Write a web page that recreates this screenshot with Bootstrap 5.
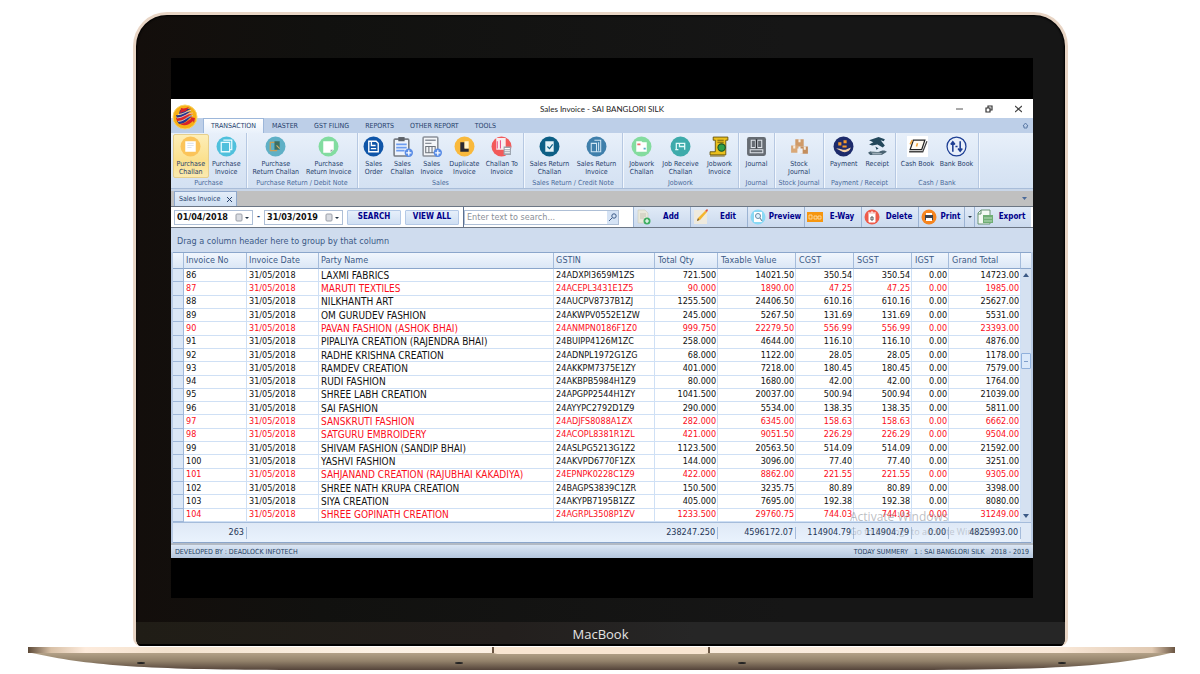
<!DOCTYPE html>
<html lang="en">
<head>
<meta charset="utf-8">
<meta name="viewport" content="width=device-width, initial-scale=1">
<title>Sales Invoice - SAI BANGLORI SILK</title>
<link href="https://cdn.jsdelivr.net/npm/bootstrap@5.3.0/dist/css/bootstrap.min.css" rel="stylesheet">
<style>
  :root { --ink: #26406b; --line: #8ba3c4; --navy: #00008b; }
  body { background: #fff; font-family: "DejaVu Sans Condensed", "DejaVu Sans", sans-serif; font-size: 7px; line-height: 8px; color: var(--ink); }
  button, input { font: inherit; color: inherit; }
  button { background: none; border: 0; padding: 0; }
  svg { display: block; flex: none; }

  /* laptop */
  .lid { margin: 12px 132px 0 133px; border: 3px solid #e8d5c5; border-bottom: 0; border-radius: 34px 34px 8px 8px; background: linear-gradient(90deg, #130e0b, #11110f 20%, #161616 70%); overflow: hidden; box-shadow: inset 0 0 2px 1px #000; }
  .bezel { padding: 43px 32px 24px 35px; }
  .display { background: #000; padding: 41px 0 40px; }
  .chin { height: 24px; background: linear-gradient(90deg, #201d16, #231f1d 40%, #262626 60%); border-bottom: 2px solid #000; color: #e4e4e4; font: 13px/24px "Open Sans", sans-serif; }
  .deck { margin: 0 25px 0 28px; height: 25px; }

  /* window */
  .app { background: #b9cbe4; }
  .titlebar { height: 19px; background: #fff; color: #222; font-family: Lato, sans-serif; font-size: 8px; }
  .titlebar .controls { gap: 22px; padding-right: 11px; }
  .orb { left: 1px; top: 5px; z-index: 2; }
  .tabstrip { height: 15px; background: #bdcfe8; padding: 0 4px 0 32px; }
  .tabstrip a { color: var(--ink); text-decoration: none; padding: 4px 0 3px; margin-right: 16px; }
  .tabstrip a.active { background: linear-gradient(#fff, #e9f1fb); padding: 3px 7px; margin-right: 8px; border: 1px solid #9db7da; border-bottom: 0; }
  .ribbon { height: 56px; background: linear-gradient(#e8f0fa, #dae6f5 60%, #d4e1f2); border-bottom: 1px solid #a9bdd9; }
  .rgroup { border-right: 1px solid #b6c8e2; box-shadow: 1px 0 0 #f2f7fd; padding: 1px 2px 0; }
  .rgroup .caption { text-align: center; line-height: 9px; color: #4a6a9a; white-space: nowrap; }
  .rgroup button { flex: 1 1 auto; display: flex; flex-direction: column; align-items: center; padding-top: 1px; height: 44px; white-space: nowrap; border: 1px solid transparent; border-radius: 2px; }
  .rgroup button svg { width: 21px; height: 21px; margin-bottom: 3px; }
  .rgroup button.hot { background: linear-gradient(#fdeeb8, #fbe08d 60%, #fbeab0); border-color: #e6cf8c; }
  .rg-1 { width: 76px; } .rg-2 { width: 111px; } .rg-3 { width: 166px; } .rg-4 { width: 99px; } .rg-5 { width: 116px; }
  .rg-6 { width: 36px; } .rg-7 { width: 49px; } .rg-8 { width: 72px; } .rg-9 { width: 83px; }

  .doctabs { height: 17px; background: #c0c0c0; border-top: 2px solid #c9d6e8; padding-left: 3px; padding-right: 6px; }
  .doctabs .doctab { background: linear-gradient(#e3edf9, #cfdff2); border: 1px solid #8fa8cc; border-bottom: 0; padding: 2px 4px; gap: 7px; }

  .tools { height: 22px; border-top: 1px solid #6c7684; border-bottom: 1px solid #6c7684; background: #fff; font-size: 8px; font-weight: bold; padding: 0 2px 0 3px; }
  .datebox { width: 79px; height: 15px; border: 1px solid #aebfd6; }
  .datebox input { font-size: 9px; color: #111; width: 60px; border: 0; padding: 0 0 0 2px; background: none; font-weight: bold; }
  .blue-btn { width: 54px; height: 15px; border: 1px solid #b4c9e6; border-radius: 1px; background: linear-gradient(#e6effa, #cfdff3); color: var(--navy); font-weight: bold; }
  .searchbox { width: 155px; height: 15px; border: 1px solid #aebfd6; font-size: 9px; font-weight: normal; }
  .searchbox input { border: 0; padding: 0 2px; flex: 1; min-width: 0; font-weight: normal; }
  .searchbox input::placeholder { color: #8a8f98; opacity: 1; }
  .searchbox button { width: 11px; background: #d5e3f5; }
  .actions { background: #d3e0f1; height: 20px; }
  .actions button { width: 57px; padding: 0 2px; gap: 2px; color: var(--navy); font-weight: bold; border-left: 1px solid #9bb3d3; background: linear-gradient(#e0eaf7, #cbdaee); display: flex; align-items: center; }
  .actions button span { flex: 1; text-align: center; }
  .actions button.print { width: 46px; }
  .actions button.drop { width: 10px; }

  .groupbar { height: 24px; background: #cfdcee; font-size: 9px; line-height: 26px; padding-left: 6px; color: #3c5a86; }
  .gridwrap { margin: 0 2px; border: 1px solid #8ba6cb; border-width: 1px 0; background: #fff; }
  .grid { table-layout: fixed; width: 100%; height: 289px; border-collapse: separate; border-spacing: 0; font-size: 9px; line-height: 11px; color: #111; }
  .grid td, .grid th { padding: 0 2px; white-space: nowrap; overflow: hidden; vertical-align: middle; }
  .grid thead th { height: 16px; font-weight: normal; color: #3c5a86; background: linear-gradient(#f1f6fd, #dbe7f6); border-right: 1px solid #a5bcdb; border-bottom: 1px solid #8ba6cb; }
  .grid thead th:nth-child(n+6) { padding-left: 3px; }
  .grid tbody td { border-right: 1px solid #cfe0f5; border-bottom: 1px solid #cfe0f5; }
  .grid tbody td:first-child { background: #dbe7f6; border-right-color: #9fb8da; border-bottom-color: #9fb8da; }
  .grid tbody tr.due { color: #fb0d1b; }
  .grid td.party { font-size: 10px; }
  .grid td.num { text-align: right; padding-right: 1px; }
  .grid tfoot td { height: 20px; color: #1f3657; text-align: right; background: linear-gradient(#dfe9f6, #e9f2fd); border-top: 1px solid #a5bcdb; }
  .grid tfoot .sum { background: linear-gradient(#a5bcdb, #a5bcdb) right center / 1px 12px no-repeat, linear-gradient(#dfe9f6, #e9f2fd); padding-right: 3px; }
  .c-mark { width: 11px; } .c-no { width: 63px; } .c-date { width: 72px; } .c-gst { width: 101px; } .c-qty { width: 63px; }
  .c-tax { width: 78px; } .c-tx { width: 58px; } .c-igst { width: 37px; } .c-total { width: 72px; }
  .rail { width: 10px; background: #dfe9f6; }
  .rail .cap { height: 16px; background: linear-gradient(#f1f6fd, #dbe7f6); border-bottom: 1px solid #8ba6cb; }
  .rail .track { background: #d5e1f1; }
  .rail .thumb { height: 16px; border: 1px solid #8fb0dc; background: linear-gradient(#7f9fcb, #7f9fcb) center / 4px 1px no-repeat, #dbe9fa; border-radius: 1px; margin-top: 76px; }
  .rail .foot { height: 20px; border-top: 1px solid #a5bcdb; }
  .watermark { right: 23px; bottom: 5px; width: 160px; color: rgba(120, 125, 135, .5); font-family: "Open Sans", sans-serif; pointer-events: none; white-space: nowrap; }
  .watermark div:first-child { font-size: 12px; line-height: 16px; }
  .watermark div:last-child { font-size: 9px; line-height: 13px; opacity: .7; }
  .statusbar { height: 15px; border-top: 2px solid #b3bac4; background: linear-gradient(#dbe6f4, #b5c7de); padding: 0 4px; color: #24405f; white-space: pre; }
</style>
</head>
<body>
<svg width="0" height="0" class="position-absolute" aria-hidden="true">
  <symbol id="i-case" viewBox="0 0 20 20"><path d="M5 6h8v9H5zM7 4h8v9h-2" fill="none" stroke="#e9fbff" stroke-width="1.2"/></symbol>
  <symbol id="i-plus" viewBox="0 0 20 20"><circle cx="16" cy="16" r="4" fill="#5a8de6"/><path d="M16 13.500v5M13.500 16h5" stroke="#fff" stroke-width="1.200"/></symbol>
</svg>

<main>
  <div class="lid">
    <div class="bezel">
      <div class="display">
        <div class="app position-relative">

          <svg class="orb position-absolute" width="26" height="26" viewBox="0 0 26 26" aria-hidden="true">
            <circle cx="13" cy="13" r="12" fill="#f7b016" stroke="#f6d36b"/>
            <path d="M8 6c4 1 7-2 11-1-4 1-7 5-12 5zM4 11c6 1 9-4 15-4-4 3-8 7-14 7z" fill="#27348f"/>
            <path d="M4 14c6 1 10-5 17-5-5 3-9 8-16 8z" fill="#d8222b"/>
            <path d="M9 4c3 1 5 0 8-1l-3 4-6 2z" fill="#d8222b"/>
            <path d="M5 17c6 1 10-5 16-6-4 4-8 9-14 9z" fill="#27348f"/>
            <path d="M8 20c5 0 8-4 11-5l-1-2 5 1-1 5-1-2c-3 3-8 6-13 3z" fill="#d8222b"/>
            <path d="M5 14c6 0 10-5 16-5M6 17.500c6 0 9-5 15-6M6 10.500c5 0 8-3 13-4" stroke="#f5e3dc" stroke-width=".7" fill="none"/>
          </svg>

          <header class="titlebar d-flex align-items-center position-relative">
            <div class="flex-fill text-center">Sales Invoice - SAI BANGLORI SILK</div>
            <div class="controls d-flex align-items-center position-absolute end-0">
              <button aria-label="Minimize"><svg width="7" height="8" viewBox="0 0 7 8"><path d="M0 4h7" stroke="#555"/></svg></button>
              <button aria-label="Restore"><svg width="8" height="8" viewBox="0 0 8 8"><path d="M1 3h4v4H1zM3 3V1h4v4H5" fill="none" stroke="#333" stroke-width="1.200"/></svg></button>
              <button aria-label="Close"><svg width="7" height="8" viewBox="0 0 7 8"><path d="M0 1l7 6M7 1L0 7" stroke="#444" stroke-width="1.200"/></svg></button>
            </div>
          </header>

          <nav class="tabstrip d-flex align-items-stretch">
            <a href="#" class="active">TRANSACTION</a><a href="#">MASTER</a><a href="#">GST FILING</a><a href="#">REPORTS</a><a href="#">OTHER REPORT</a><a href="#">TOOLS</a>
            <button class="ms-auto" aria-label="Collapse ribbon"><svg width="7" height="7" viewBox="0 0 7 7"><path d="M1 4l2.500-3L6 4M1 4h1v2h3V4h1" fill="none" stroke="#4a6a9a" stroke-width=".8"/></svg></button>
          </nav>

          <div class="ribbon d-flex">
            <section class="rgroup rg-1 d-flex flex-column justify-content-between">
              <div class="d-flex">
                <button class="hot"><svg viewBox="0 0 20 20"><circle cx="10" cy="10" r="9.500" fill="#fbc45a"/><rect x="5" y="5" width="10" height="10" fill="#fff"/><path d="M7 7h6M7 9h6M7 11h4" stroke="#dfe5ee"/></svg><span>Purchase<br>Challan</span></button>
                <button><svg viewBox="0 0 20 20"><circle cx="10" cy="10" r="9.500" fill="#4fc0dc"/><use href="#i-case"/></svg><span>Purchase<br>Invoice</span></button>
              </div>
              <div class="caption">Purchase</div>
            </section>
            <section class="rgroup rg-2 d-flex flex-column justify-content-between">
              <div class="d-flex">
                <button><svg viewBox="0 0 20 20"><circle cx="10" cy="10" r="9.500" fill="#5fb0c6"/><path d="M5 6h6v8H5z" fill="none" stroke="#c9a05a" stroke-width="1.200"/><path d="M9 5h5v8H9z" fill="#3c6f63"/><path d="M11 9l3 3" stroke="#d9b46a"/></svg><span>Purchase<br>Return Challan</span></button>
                <button><svg viewBox="0 0 20 20"><circle cx="10" cy="10" r="9.500" fill="#82dca0"/><path d="M5 5h10v8l-3 3H5z" fill="#fff"/><path d="M14.500 13H12v2.500z" fill="#99a0a8"/></svg><span>Purchase<br>Return Invoice</span></button>
              </div>
              <div class="caption">Purchase Return / Debit Note</div>
            </section>
            <section class="rgroup rg-3 d-flex flex-column justify-content-between">
              <div class="d-flex">
                <button><svg viewBox="0 0 20 20"><circle cx="10" cy="10" r="9.500" fill="#0f55a8"/><path d="M5.500 5h7l2 2v8h-9z" fill="none" stroke="#fff" stroke-width="1.300"/><path d="M8 5v4h4M7.500 12h5" stroke="#fff" fill="none" stroke-width="1.300"/></svg><span>Sales<br>Order</span></button>
                <button><svg viewBox="0 0 20 20"><rect x="2" y="3" width="14" height="16" rx="1" fill="#eef3fb" stroke="#777c84" stroke-width="1.500"/><rect x="6" y="1" width="6" height="4" fill="#5c6168"/><path d="M4 8h10M4 11h10M4 14h8" stroke="#6c9cf0" stroke-width="1.600"/><use href="#i-plus"/></svg><span>Sales<br>Challan</span></button>
                <button><svg viewBox="0 0 20 20"><rect x="2" y="1" width="14" height="18" rx="1" fill="#f4f6f9" stroke="#8a9099" stroke-width="1.500"/><path d="M4 4h10M4 7h6" stroke="#8a9099" stroke-width="1.300"/><path d="M4.500 10h9v6h-9zM7.500 10v6M10.500 10v6" stroke="#6d737b" fill="none"/><use href="#i-plus"/></svg><span>Sales<br>Invoice</span></button>
                <button><svg viewBox="0 0 20 20"><circle cx="10" cy="10" r="9.500" fill="#f9b93c"/><path d="M6 6h4v6h4v3H6z" fill="#2b2a33"/><path d="M10 5h4v7h-4z" fill="#fff3cf"/></svg><span>Duplicate<br>Invoice</span></button>
                <button><svg viewBox="0 0 20 20"><circle cx="10" cy="10" r="9.500" fill="#f25a5a"/><path d="M5 2h9v11H5z" fill="#f8eef0"/><path d="M6 5v7M9 4v8" stroke="#e58" /><path d="M12 10h7v8h-7z" fill="#9aa3ad"/><path d="M13 12h5M13 14h5M13 16h5" stroke="#fff"/></svg><span>Challan To<br>Invoice</span></button>
              </div>
              <div class="caption">Sales</div>
            </section>
            <section class="rgroup rg-4 d-flex flex-column justify-content-between">
              <div class="d-flex">
                <button><svg viewBox="0 0 20 20"><circle cx="10" cy="10" r="9.500" fill="#0d5f85"/><path d="M6 5h8v10H6z" fill="#e4f2f7"/><path d="M8 10l2 2 3-4" fill="none" stroke="#0d5f85" stroke-width="1.200"/></svg><span>Sales Return<br>Challan</span></button>
                <button><svg viewBox="0 0 20 20"><circle cx="10" cy="10" r="9.500" fill="#3f7fab"/><path d="M5 7h5v8H5zM8 4h6v11h-4M12 6v8" fill="none" stroke="#cfe6f5"/></svg><span>Sales Return<br>Invoice</span></button>
              </div>
              <div class="caption">Sales Return / Credit Note</div>
            </section>
            <section class="rgroup rg-5 d-flex flex-column justify-content-between">
              <div class="d-flex">
                <button><svg viewBox="0 0 20 20"><circle cx="10" cy="10" r="9.500" fill="#84dc9f"/><path d="M5 5h5l1 1h4v9H5z" fill="#fff"/><path d="M6 8h3" stroke="#f06a6a" stroke-width="1.500"/><path d="M12 12h2" stroke="#5ac" stroke-width="1.500"/></svg><span>Jobwork<br>Challan</span></button>
                <button><svg viewBox="0 0 20 20"><circle cx="10" cy="10" r="9.500" fill="#3eabab"/><path d="M6 13V7h8v6M9 7v3h5M5 13h3" fill="none" stroke="#e4fafa" stroke-width="1.200"/></svg><span>Job Receive<br>Challan</span></button>
                <button><svg viewBox="0 0 20 20"><path d="M4 1h14v3h-2v14H1v-3h5V4H4z" fill="#eac01d" stroke="#5c4a08" stroke-width=".8"/><path d="M8 4h6M8 6h6M1 19h14" stroke="#7a6310"/><circle cx="12" cy="11" r="3.500" fill="#2fa04a" stroke="#14502a"/></svg><span>Jobwork<br>Invoice</span></button>
              </div>
              <div class="caption">Jobwork</div>
            </section>
            <section class="rgroup rg-6 d-flex flex-column justify-content-between">
              <div class="d-flex">
                <button><svg viewBox="0 0 20 20"><rect x="1" y="1" width="18" height="18" rx="2" fill="#666c73"/><path d="M5 4h4v7H5zM11 4h4v7h-4zM4 13h12v3H4z" fill="none" stroke="#dfe4ea"/><path d="M10 3v9" stroke="#2c3036" stroke-width="1.500"/></svg>Journal</button>
              </div>
              <div class="caption">Journal</div>
            </section>
            <section class="rgroup rg-7 d-flex flex-column justify-content-between">
              <div class="d-flex">
                <button><svg viewBox="0 0 20 20"><path d="M6 3h8v7H6z" fill="#cf9a68"/><path d="M2 9h7v7H2z" fill="#d9a878"/><path d="M11 10h7v7h-7z" fill="#c38d5c"/><path d="M9 3h2v3H9zM4 9h2v3H4zM14 10h2v3h-2z" fill="#f6ecdf"/><path d="M8 12h5v5H8z" fill="#eef0f4"/></svg><span>Stock<br>Journal</span></button>
              </div>
              <div class="caption">Stock Journal</div>
            </section>
            <section class="rgroup rg-8 d-flex flex-column justify-content-between">
              <div class="d-flex">
                <button><svg viewBox="0 0 20 20"><circle cx="10" cy="10" r="9.500" fill="#1d2b6b"/><path d="M5 6h3v3H5zM10 4h3v3h-3zM9 9h4v2H9z" fill="#f49a2c"/><path d="M3 12c4-1 6 2 9 1l5-2c-1 4-5 5-8 4z" fill="#f3d2a8"/></svg>Payment</button>
                <button><svg viewBox="0 0 20 20"><path d="M2 4l9-3 6 2-1 2-3-1 4 5-2 2-5-3-5 1-3-1 4-2z" fill="#24485c"/><path d="M8 10l3 2-2 1z" fill="#24485c"/><path d="M1 16c4-3 7 0 10-1s5-2 8 0l-5 3H3z" fill="#4a6372"/><path d="M4 15h8M5 17h9" stroke="#dfe8ee" stroke-width=".8"/></svg>Receipt</button>
              </div>
              <div class="caption">Payment / Receipt</div>
            </section>
            <section class="rgroup rg-9 d-flex flex-column justify-content-between">
              <div class="d-flex">
                <button><svg viewBox="0 0 20 20"><path d="M0 0h20v20H0z" fill="#fff"/><path d="M6 4h11l-3 9H3z" fill="#fffaf0" stroke="#222" stroke-width="1.200"/><path d="M2 15h13l4-10" fill="none" stroke="#444" stroke-width="1.200"/><path d="M9 10l1-3M3 8l2-4" stroke="#f3a63a" stroke-width="1.500"/></svg>Cash Book</button>
                <button><svg viewBox="0 0 20 20"><circle cx="10" cy="10" r="9" fill="#e8effa" stroke="#1e3f94" stroke-width="1.200"/><path d="M6.500 15V6M4.500 8l2-2.500 2 2.500M13.500 5v9M11.500 12l2 2.500 2-2.500" fill="none" stroke="#1e3f94" stroke-width="1.500"/><path d="M9 10h2" stroke="#1e3f94" stroke-width="1.500"/></svg>Bank Book</button>
              </div>
              <div class="caption">Cash / Bank</div>
            </section>
          </div>

          <div class="doctabs d-flex align-items-stretch">
            <div class="doctab d-flex align-items-center">Sales Invoice <button aria-label="Close tab"><svg width="5" height="5" viewBox="0 0 5 5"><path d="M0 0l5 5M5 0L0 5" stroke="#26406b"/></svg></button></div>
            <button class="ms-auto" aria-label="Open documents"><svg width="5" height="3" viewBox="0 0 5 3"><path d="M0 0h5L2.500 3z" fill="#4a6a9a"/></svg></button>
          </div>

          <div class="tools d-flex align-items-center">
            <div class="datebox d-flex align-items-center"><input type="text" value="01/04/2018" aria-label="From date">
              <svg width="14" height="9" viewBox="0 0 14 9"><rect x="1" y="1" width="6" height="7" rx="1" fill="#d9dce2" stroke="#9a9fa8"/><path d="M10 4h4l-2 2z" fill="#234"/></svg></div>
            <span class="px-1">-</span>
            <div class="datebox d-flex align-items-center"><input type="text" value="31/03/2019" aria-label="To date">
              <svg width="14" height="9" viewBox="0 0 14 9"><rect x="1" y="1" width="6" height="7" rx="1" fill="#d9dce2" stroke="#9a9fa8"/><path d="M10 4h4l-2 2z" fill="#234"/></svg></div>
            <button class="blue-btn ms-1">SEARCH</button>
            <button class="blue-btn mx-1">VIEW ALL</button>
            <div class="vr opacity-75"></div>
            <div class="searchbox d-flex"><input type="text" placeholder="Enter text to search..." aria-label="Search"><button aria-label="Find"><svg class="m-auto" width="8" height="8" viewBox="0 0 8 8"><circle cx="5" cy="3" r="2.200" fill="none" stroke="#3c5a86"/><path d="M3 5L0 8" stroke="#3c5a86"/></svg></button></div>
            <div class="actions d-flex ms-auto">
              <button><svg width="16" height="16" viewBox="0 0 16 16"><path d="M2 1h7l3 3v10H2z" fill="#e9e8dc" stroke="#cfcdbd" stroke-width=".6"/><path d="M4 5h6M4 7h6M4 9h4" stroke="#c6c4b4"/><circle cx="11" cy="12" r="3.500" fill="#3fae63"/><path d="M11 10v4M9 12h4" stroke="#fff" stroke-width="1.200"/></svg><span>Add</span></button>
              <button><svg width="16" height="16" viewBox="0 0 16 16"><path d="M1 1h13v14H1z" fill="#eeeade"/><path d="M4 12l1-3 7-7 2 1-7 8z" fill="#f4b52c"/><path d="M12 2l2 1 1-2-1-1z" fill="#e2573a"/><path d="M4 12l1-3 1 2z" fill="#654"/></svg><span>Edit</span></button>
              <button><svg width="16" height="16" viewBox="0 0 16 16"><circle cx="8" cy="8" r="7.500" fill="#8ad9f5"/><rect x="4" y="3" width="8" height="10" fill="#fff"/><circle cx="8" cy="7" r="2.500" fill="#dff2ff" stroke="#6b8aa3"/><path d="M10 9l2 3" stroke="#6b8aa3" stroke-width="1.200"/></svg><span>Preview</span></button>
              <button><svg width="16" height="16" viewBox="0 0 16 16"><path d="M0 3h16v10H0z" fill="#f6960f"/><path d="M2 6h3v4H2zM7 7h3v3H7zM11 7h3v3h-3z" fill="none" stroke="#fde3b4" stroke-width=".8"/></svg><span>E-Way</span></button>
              <button><svg width="16" height="16" viewBox="0 0 16 16"><circle cx="8" cy="8" r="7.500" fill="#ee5b4a"/><path d="M5 5h6v8H5zM4 4h8M7 3h2" fill="#fff" stroke="#fff"/><path d="M7 8h2v3H7z" fill="none" stroke="#555"/></svg><span>Delete</span></button>
              <button class="print"><svg width="16" height="16" viewBox="0 0 16 16"><circle cx="8" cy="8" r="7.500" fill="#f5851f"/><path d="M4 6h8v5H4z" fill="#3a4350"/><path d="M5 4h6v2H5zM5 9h6v3H5z" fill="#fff"/></svg><span>Print</span></button>
              <button class="drop" aria-label="Print options"><svg class="mx-auto" width="4" height="3" viewBox="0 0 4 3"><path d="M0 0h4L2 2z" fill="#234"/></svg></button>
              <button><svg width="16" height="16" viewBox="0 0 16 16"><path d="M4 1h9v14H1V4z" fill="#f4faf4" stroke="#5f8d6a" stroke-width=".9"/><path d="M1 5h3V1" fill="none" stroke="#5f8d6a"/><path d="M6 6h10v8H6z" fill="#6fae74"/><path d="M7 9h8M7 12h8" stroke="#cfe8d0" stroke-width=".8"/></svg><span>Export</span></button>
            </div>
          </div>

          <div class="groupbar">Drag a column header here to group by that column</div>

          <div class="gridwrap d-flex">
            <table class="grid">
              <colgroup><col class="c-mark"><col class="c-no"><col class="c-date"><col><col class="c-gst"><col class="c-qty"><col class="c-tax"><col class="c-tx"><col class="c-tx"><col class="c-igst"><col class="c-total"></colgroup>
              <thead><tr><th></th><th>Invoice No</th><th>Invoice Date</th><th>Party Name</th><th>GSTIN</th><th>Total Qty</th><th>Taxable Value</th><th>CGST</th><th>SGST</th><th>IGST</th><th>Grand Total</th></tr></thead>
              <tbody id="rows"></tbody>
              <tfoot><tr><td></td><td class="sum">263</td><td></td><td></td><td></td><td class="sum">238247.250</td><td class="sum">4596172.07</td><td class="sum">114904.79</td><td class="sum">114904.79</td><td class="sum">0.00</td><td class="sum">4825993.00</td></tr></tfoot>
            </table>
            <div class="rail d-flex flex-column">
              <div class="cap"></div>
              <div class="track flex-fill d-flex flex-column">
                <svg class="mx-auto mt-1" width="6" height="4" viewBox="0 0 6 4"><path d="M0 4h6L3 0z" fill="#3c5a86"/></svg>
                <div class="thumb"></div>
                <svg class="mx-auto mt-auto mb-1" width="6" height="4" viewBox="0 0 6 4"><path d="M0 0h6L3 4z" fill="#3c5a86"/></svg>
              </div>
              <div class="foot"></div>
            </div>
          </div>

          <div class="position-relative">
            <div class="watermark position-absolute"><div>Activate Windows</div><div>Go to Settings to activate Windows.</div></div>
          </div>
          <footer class="statusbar d-flex justify-content-between align-items-center"><span>DEVELOPED BY : DEADLOCK INFOTECH</span><span>TODAY SUMMERY   1 : SAI BANGLORI SILK   2018 - 2019</span></footer>
        </div>
      </div>
    </div>
    <div class="chin text-center">MacBook</div>
  </div>

  <div class="deck">
    <svg width="100%" height="25" viewBox="0 0 1147 25" preserveAspectRatio="none" aria-hidden="true">
      <defs>
        <linearGradient id="edge" gradientUnits="userSpaceOnUse" x1="0" y1="0" x2="1147" y2="0"><stop offset="0" stop-color="#5d4a38"/><stop offset=".02" stop-color="#d8c0a6"/><stop offset=".05" stop-color="#fdebdc"/><stop offset=".12" stop-color="#f3e2ce"/><stop offset=".3" stop-color="#fcf1e4"/><stop offset=".9" stop-color="#f9e8d8"/><stop offset=".98" stop-color="#e0c9b2"/><stop offset="1" stop-color="#6b5643"/></linearGradient>
        <linearGradient id="under" x1="0" y1="0" x2="0" y2="1"><stop offset="0" stop-color="#b7a58b"/><stop offset=".5" stop-color="#93826b"/><stop offset="1" stop-color="#54443a"/></linearGradient>
      </defs>
      <path d="M0 6C60 20 120 24 280 24H870C1030 24 1090 20 1147 6z" fill="url(#under)"/>
      <path d="M0 1h1147v6H0z" fill="url(#edge)"/>
      <path d="M464 1h218v5q-2 2-8 2H472q-6 0-8-2z" fill="#f8e5d1"/>
      <path d="M465 1v6M681 1v6" stroke="#6b5643" stroke-width="2"/>
      <g fill="#222"><ellipse cx="113" cy="17" rx="4" ry="1"/><ellipse cx="431" cy="17" rx="4" ry="1"/><ellipse cx="714" cy="17" rx="4" ry="1"/><ellipse cx="1034" cy="17" rx="4" ry="1"/></g>
    </svg>
  </div>
</main>

<script>
  // no, party, gstin, quantity, taxable value, tax per half, grand total, overdue
  const invoices = [
    [86, "LAXMI FABRICS", "24ADXPI3659M1ZS", "721.500", "14021.50", "350.54", "14723.00", 0],
    [87, "MARUTI TEXTILES", "24ACEPL3431E1Z5", "90.000", "1890.00", "47.25", "1985.00", 1],
    [88, "NILKHANTH ART", "24AUCPV8737B1ZJ", "1255.500", "24406.50", "610.16", "25627.00", 0],
    [89, "OM GURUDEV FASHION", "24AKWPV0552E1ZW", "245.000", "5267.50", "131.69", "5531.00", 0],
    [90, "PAVAN FASHION (ASHOK BHAI)", "24ANMPN0186F1Z0", "999.750", "22279.50", "556.99", "23393.00", 1],
    [91, "PIPALIYA CREATION (RAJENDRA BHAI)", "24BUIPP4126M1ZC", "258.000", "4644.00", "116.10", "4876.00", 0],
    [92, "RADHE KRISHNA CREATION", "24ADNPL1972G1ZG", "68.000", "1122.00", "28.05", "1178.00", 0],
    [93, "RAMDEV CREATION", "24AKKPM7375E1ZY", "401.000", "7218.00", "180.45", "7579.00", 0],
    [94, "RUDI FASHION", "24AKBPB5984H1Z9", "80.000", "1680.00", "42.00", "1764.00", 0],
    [95, "SHREE LABH CREATION", "24APGPP2544H1ZY", "1041.500", "20037.00", "500.94", "21039.00", 0],
    [96, "SAI FASHION", "24AYYPC2792D1Z9", "290.000", "5534.00", "138.35", "5811.00", 0],
    [97, "SANSKRUTI FASHION", "24ADJFS8088A1ZX", "282.000", "6345.00", "158.63", "6662.00", 1],
    [98, "SATGURU EMBROIDERY", "24ACOPL8381R1ZL", "421.000", "9051.50", "226.29", "9504.00", 1],
    [99, "SHIVAM FASHION (SANDIP BHAI)", "24ASLPG5213G1Z2", "1123.500", "20563.50", "514.09", "21592.00", 0],
    [100, "YASHVI FASHION", "24AKVPD6770F1ZX", "144.000", "3096.00", "77.40", "3251.00", 0],
    [101, "SAHJANAND CREATION (RAJUBHAI KAKADIYA)", "24EPNPK0228C1Z9", "422.000", "8862.00", "221.55", "9305.00", 1],
    [102, "SHREE NATH KRUPA CREATION", "24BAGPS3839C1ZR", "150.500", "3235.75", "80.89", "3398.00", 0],
    [103, "SIYA CREATION", "24AKYPB7195B1ZZ", "405.000", "7695.00", "192.38", "8080.00", 0],
    [104, "SHREE GOPINATH CREATION", "24AGRPL3508P1ZV", "1233.500", "29760.75", "744.03", "31249.00", 1]
  ];
  document.getElementById("rows").innerHTML = invoices.map(([no, party, gst, qty, value, tax, total, due]) =>
    `<tr class="${due ? "due" : ""}"><td></td><td>${no}</td><td>31/05/2018</td><td class="party">${party}</td><td>${gst}</td>` +
    [qty, value, tax, tax, "0.00", total].map(n => `<td class="num">${n}</td>`).join("") + `</tr>`).join("");
</script>
<script src="https://cdn.jsdelivr.net/npm/bootstrap@5.3.0/dist/js/bootstrap.bundle.min.js"></script>
</body>
</html>
